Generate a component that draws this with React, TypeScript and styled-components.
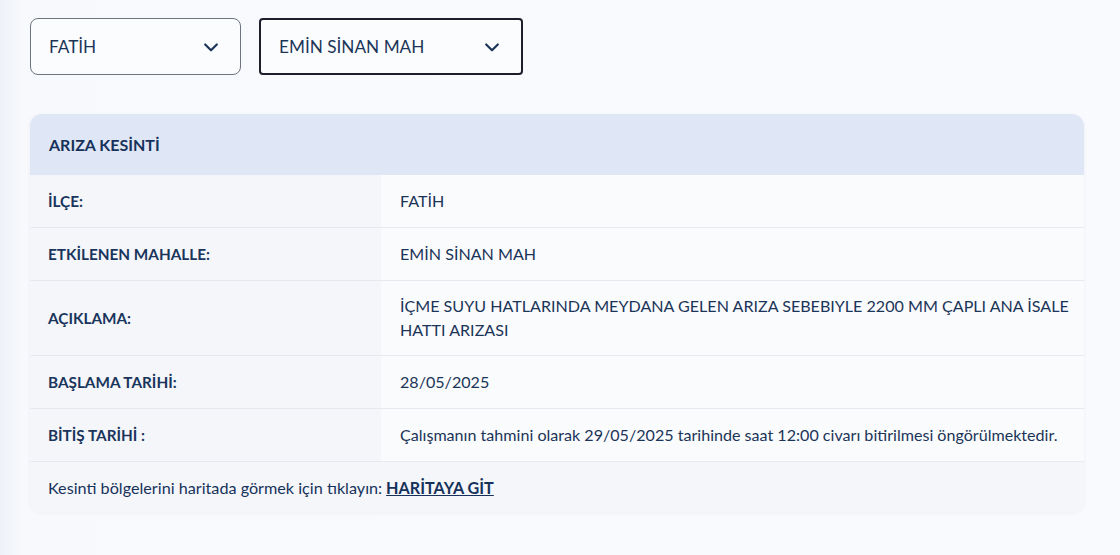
import React, { useState } from "react";
import styled, { createGlobalStyle } from "styled-components";

const GlobalStyle = createGlobalStyle`
    html, body {
        margin: 0;
        padding: 0;
    }
    body {
        background: linear-gradient(90deg, #eef1f7 0px, #f7f9fc 22px, #f8fafd 100%);
        font-family: Lato, "Noto Sans", sans-serif;
        color: #1b3558;
    }
`;

const Page = styled.div`
    padding: 18px 36px 40px 30px;
    display: flex;
    flex-direction: column;
    gap: 39px;
`;

const Filters = styled.div`
    display: flex;
    gap: 18px;
`;

const Select = styled.div<{ $active?: boolean; $width: number }>`
    box-sizing: border-box;
    width: ${(p) => p.$width}px;
    height: 57px;
    padding: 0 19px 0 ${(p) => (p.$active ? "18px" : "18px")};
    display: flex;
    align-items: center;
    justify-content: space-between;
    background: #fbfcfe;
    border: ${(p) => (p.$active ? "2px solid #1c1f2b" : "1px solid #6d7480")};
    border-radius: ${(p) => (p.$active ? "4px" : "8px")};
    font-size: 17.2px;
    color: #1b3558;
    cursor: pointer;
`;

const Card = styled.div`
    width: 1054px;
    border-radius: 12px;
    overflow: hidden;
    background: #fafbfd;
    box-shadow: 0 1px 4px rgba(30, 50, 90, 0.05);
`;

const Header = styled.div`
    height: 61px;
    padding: 0 19px;
    display: flex;
    align-items: center;
    background: #dfe7f6;
    font-size: 16px;
    font-weight: 700;
    color: #17325a;
`;

const Row = styled.div<{ $height: number }>`
    display: grid;
    grid-template-columns: 351px 1fr;
    min-height: ${(p) => p.$height}px;
    border-bottom: 1px solid #e6e9ef;
`;

const Label = styled.div`
    padding: 0 18px;
    display: flex;
    align-items: center;
    background: #f4f6fa;
    font-size: 15.3px;
    font-weight: 700;
    color: #1a355c;
`;

const Value = styled.div`
    padding: 0 8px 0 19px;
    display: flex;
    align-items: center;
    font-size: 16.1px;
    line-height: 24px;
    color: #1b3558;
`;

const Footer = styled.div`
    height: 50px;
    padding: 0 18px;
    display: flex;
    align-items: center;
    background: #f4f6fa;
    font-size: 16.2px;
    color: #17325a;

    a {
        margin-left: 4px;
        font-weight: 700;
        color: #17325a;
        text-decoration: underline;
    }
`;

const Chevron = () => (
    <svg width="20" height="20" viewBox="0 0 24 24" fill="none" stroke="#1b3558" strokeWidth="2.6" strokeLinecap="round" strokeLinejoin="round">
        <path d="M5 9l7 7 7-7" />
    </svg>
);

const rows = [
    { label: "İLÇE:", value: "FATİH", height: 52 },
    { label: "ETKİLENEN MAHALLE:", value: "EMİN SİNAN MAH", height: 52 },
    { label: "AÇIKLAMA:", value: "İÇME SUYU HATLARINDA MEYDANA GELEN ARIZA SEBEBIYLE 2200 MM ÇAPLI ANA İSALE HATTI ARIZASI", height: 74 },
    { label: "BAŞLAMA TARİHİ:", value: "28/05/2025", height: 52 },
    { label: "BİTİŞ TARİHİ :", value: "Çalışmanın tahmini olarak 29/05/2025 tarihinde saat 12:00 civarı bitirilmesi öngörülmektedir.", height: 52 },
];

const App = () => {
    const [ilce] = useState("FATİH");
    const [mahalle] = useState("EMİN SİNAN MAH");

    return (
        <>
            <GlobalStyle />
            <Page>
                <Filters>
                    <Select $width={211}>
                        {ilce}
                        <Chevron />
                    </Select>
                    <Select $width={264} $active>
                        {mahalle}
                        <Chevron />
                    </Select>
                </Filters>

                <Card>
                    <Header>ARIZA KESİNTİ</Header>
                    {rows.map((r) => (
                        <Row key={r.label} $height={r.height}>
                            <Label>{r.label}</Label>
                            <Value>{r.value}</Value>
                        </Row>
                    ))}
                    <Footer>
                        Kesinti bölgelerini haritada görmek için tıklayın:
                        <a href="#">HARİTAYA GİT</a>
                    </Footer>
                </Card>
            </Page>
        </>
    );
};

export default App;
